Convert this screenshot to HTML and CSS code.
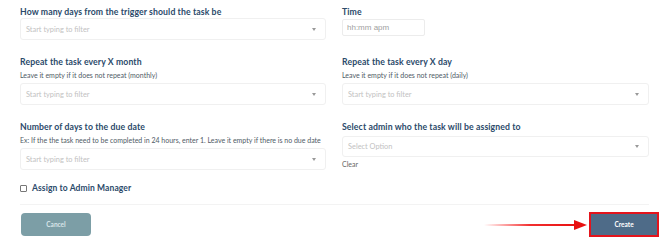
FILE: index.html
```html
<!DOCTYPE html>
<html>
<head>
  <meta charset="UTF-8">
  <title>Create task</title>
  <link rel="stylesheet" href="styles.css">
</head>
<body>
  <form class="task_form">
    <div class="grid">

      <div class="form_group row1">
        <label>How many days from the trigger should the task be</label>
        <div class="select"><span>Start typing to filter</span><i class="caret"></i></div>
      </div>

      <div class="form_group row1">
        <label>Time</label>
        <input class="time" type="text" placeholder="hh:mm apm">
      </div>

      <div class="form_group">
        <label>Repeat the task every X month</label>
        <p class="hint">Leave it empty if it does not repeat (monthly)</p>
        <div class="select"><span>Start typing to filter</span><i class="caret"></i></div>
      </div>

      <div class="form_group">
        <label>Repeat the task every X day</label>
        <p class="hint">Leave it empty if it does not repeat (daily)</p>
        <div class="select"><span>Start typing to filter</span><i class="caret"></i></div>
      </div>

      <div class="form_group">
        <label>Number of days to the due date</label>
        <p class="hint">Ex: If the the task need to be completed in 24 hours, enter 1. Leave it empty if there is no due date</p>
        <div class="select"><span>Start typing to filter</span><i class="caret"></i></div>
      </div>

      <div class="form_group">
        <label>Select admin who the task will be assigned to</label>
        <div class="select admin"><span>Select Option</span><i class="caret"></i></div>
        <p class="clear">Clear</p>
      </div>

    </div>

    <div class="check_row">
      <input type="checkbox" id="admin_manager">
      <label for="admin_manager">Assign to Admin Manager</label>
    </div>

    <div class="btn_group">
      <button type="button" class="cancel">Cancel</button>
      <div class="create_wrap">
        <svg class="arrow" width="104" height="10" viewBox="0 0 104 10">
          <defs>
            <linearGradient id="fade" x1="0" x2="1" y1="0" y2="0">
              <stop offset="0" stop-color="#ff2020" stop-opacity="0"/>
              <stop offset="0.5" stop-color="#f01818" stop-opacity="0.9"/>
              <stop offset="1" stop-color="#e81010"/>
            </linearGradient>
          </defs>
          <rect x="0" y="4" width="92" height="2" fill="url(#fade)"/>
          <polygon points="90,0 103,5 90,10" fill="#e81010"/>
        </svg>
        <button type="button" class="create">Create</button>
      </div>
    </div>
  </form>
</body>
</html>
```

FILE: styles.css
```css
body {
  margin: 0;
  font-family: Lato, "Noto Sans", sans-serif;
  color: #2b4a6a;
  background: #fff;
}

.task_form { padding: 0 21px 0 20px; }

.grid {
  display: grid;
  grid-template-columns: 306px 307px;
  column-gap: 16px;
  row-gap: 16px;
  padding-top: 6px;
}

.form_group label {
  display: block;
  font-size: 8.7px;
  line-height: 12px;
  font-weight: 700;
  letter-spacing: 0.1px;
}
.form_group .hint {
  margin: 0 0 1px;
  font-size: 7px;
  line-height: 14px;
  color: #505b66;
}
.form_group .select {
  display: flex;
  align-items: center;
  justify-content: space-between;
  box-sizing: border-box;
  height: 22px;
  padding: 0 9px 0 5px;
  border: 1px solid #f0f0f0;
  border-radius: 3px;
  font-size: 7.4px;
  color: #c2c2c2;
}
.form_group .select.admin { margin-top: 3px; height: 21px; }
.caret {
  width: 0;
  height: 0;
  border-left: 2.5px solid transparent;
  border-right: 2.5px solid transparent;
  border-top: 3px solid #999;
}
.form_group .clear {
  margin: 0;
  font-size: 7px;
  line-height: 14px;
  color: #666;
}
.form_group input.time {
  display: block;
  box-sizing: border-box;
  width: 83px;
  height: 17px;
  margin-top: 1px;
  padding: 0 4px;
  border: 1px solid #ececec;
  border-radius: 2px;
  font-family: "Liberation Sans", Arial, sans-serif;
  font-size: 8px;
  outline: none;
}
.form_group input.time::placeholder { color: #a0a0a0; }

.check_row {
  display: flex;
  align-items: center;
  margin-top: 11px;
  height: 12px;
  padding-bottom: 10px;
  border-bottom: 1px solid #f3f3f3;
}
.check_row input {
  appearance: none;
  box-sizing: border-box;
  width: 7px;
  height: 7px;
  margin: 0 5px 0 0;
  border: 1px solid #777;
  border-radius: 1px;
  background: #fff;
}
.check_row label {
  font-size: 8.5px;
  font-weight: 700;
  letter-spacing: 0.1px;
}

.btn_group {
  display: flex;
  justify-content: space-between;
  align-items: center;
  margin-top: 7px;
  margin-right: -10px;
}
.btn_group button {
  box-sizing: border-box;
  border: none;
  cursor: pointer;
  font-family: Lato, "Noto Sans", sans-serif;
  font-size: 6.5px;
  font-weight: 700;
}
.btn_group .cancel {
  width: 70px;
  height: 23px;
  margin-left: 1px;
  border-radius: 4px;
  background: #7c9ea6;
  color: #d8e4e8;
}
.create_wrap {
  display: flex;
  align-items: center;
}
.arrow { margin-right: 1px; }
.btn_group .create {
  width: 70px;
  height: 25px;
  border: 2px solid #e4141c;
  background: #4e6b88;
  color: #fff;
}
```
